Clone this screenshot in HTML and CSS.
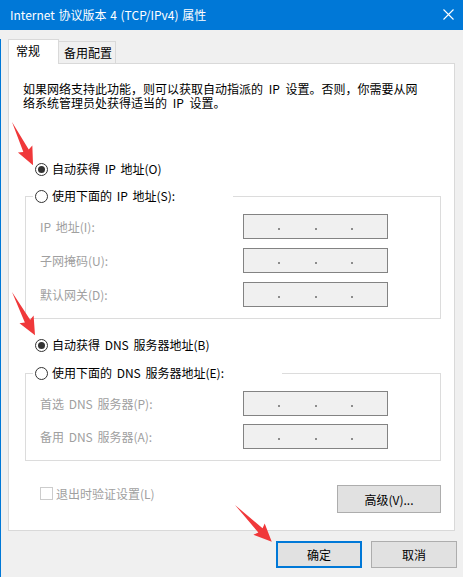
FILE: index.html
```html
<!DOCTYPE html>
<html lang="zh-CN">
<head>
<meta charset="utf-8">
<title>Internet 协议版本 4 (TCP/IPv4) 属性</title>
<link rel="stylesheet" href="styles.css">
</head>
<body>
<div class="titlebar">
  <span class="title">Internet 协议版本 4 (TCP/IPv4) 属性</span>
  <svg class="close" width="11" height="11" viewBox="0 0 11 11"><path d="M0.5 0.5 L10.5 10.5 M10.5 0.5 L0.5 10.5" stroke="#fff" stroke-width="1.1" fill="none"/></svg>
</div>
<div class="client">
  <div class="tabs">
    <div class="tab active">常规</div>
    <div class="tab">备用配置</div>
  </div>
  <div class="panel">
    <div class="desc"><span class="line">如果网络支持此功能，则可以获取自动指派的 IP 设置。否则，你需要从网</span><span class="line">络系统管理员处获得适当的 IP 设置。</span></div>
    <div class="radio-row r1"><span class="radio checked"></span>自动获得 IP 地址(O)</div>
    <fieldset class="group g1">
      <legend class="radio-row leg1"><span class="radio"></span>使用下面的 IP 地址(S):</legend>
      <div class="field"><span class="flabel">IP 地址(I):</span><span class="ipbox"><i></i><i></i><i></i></span></div>
      <div class="field"><span class="flabel">子网掩码(U):</span><span class="ipbox"><i></i><i></i><i></i></span></div>
      <div class="field"><span class="flabel">默认网关(D):</span><span class="ipbox"><i></i><i></i><i></i></span></div>
    </fieldset>
    <div class="radio-row r3"><span class="radio checked"></span>自动获得 DNS 服务器地址(B)</div>
    <fieldset class="group g2">
      <legend class="radio-row leg2"><span class="radio"></span>使用下面的 DNS 服务器地址(E):</legend>
      <div class="field"><span class="flabel">首选 DNS 服务器(P):</span><span class="ipbox"><i></i><i></i><i></i></span></div>
      <div class="field"><span class="flabel">备用 DNS 服务器(A):</span><span class="ipbox"><i></i><i></i><i></i></span></div>
    </fieldset>
    <div class="bottom-row">
      <div class="check"><span class="box"></span>退出时验证设置(L)</div>
      <div class="btn adv">高级(V)...</div>
    </div>
  </div>
  <div class="dialog-buttons">
    <div class="btn default">确定</div>
    <div class="btn">取消</div>
  </div>
</div>
<svg class="arrows" width="463" height="577" viewBox="0 0 463 577">
  <g transform="translate(12,122) rotate(64)"><polygon points="0,0 32,-3 30,-8 48,0 30,8 32,3" /></g>
  <g transform="translate(12,292) rotate(62)"><polygon points="0,0 33,-3 31,-8 49,0 31,8 33,3" /></g>
  <g transform="translate(235,505) rotate(45)"><polygon points="0,0 36,-3 34,-8 52,0 34,8 36,3" /></g>
</svg>
</body>
</html>
```
FILE: styles.css
```css
html, body {
  margin: 0;
  padding: 0;
}
body {
  width: 463px;
  height: 577px;
  background: #f0f0f0;
  font-family: "Noto Sans CJK SC", "Microsoft YaHei", sans-serif;
  font-size: 12px;
  color: #000;
  position: relative;
  overflow: hidden;
  word-spacing: 2px;
}

.titlebar {
  height: 30px;
  background: #0078d7;
  color: #fff;
  display: flex;
  align-items: center;
  justify-content: space-between;
  padding: 0 9px 0 10px;
  box-sizing: border-box;
}
.title {
  line-height: 30px;
  word-spacing: 1px;
}
.close {
  display: block;
  margin-top: -1px;
}

.client {
  border-left: 1px solid #0078d7;
  height: 547px;
  box-sizing: border-box;
}

.tabs {
  display: flex;
  align-items: flex-end;
  margin: 9px 0 0 7px;
  height: 24px;
}
.tab {
  box-sizing: border-box;
  border: 1px solid #d9d9d9;
  border-bottom: none;
  line-height: 18px;
}
.tab.active {
  width: 51px;
  height: 25px;
  margin-bottom: -1px;
  background: #fff;
  padding: 2px 0 0 7px;
  position: relative;
  z-index: 1;
}
.tab:not(.active) {
  width: 58px;
  height: 22px;
  margin-left: -1px;
  padding: 2px 0 0 5px;
}

.panel {
  margin-left: 7px;
  width: 447px;
  height: 468px;
  box-sizing: border-box;
  background: #fff;
  border: 1px solid #d9d9d9;
  padding: 18px 13px 0 14px;
  display: flex;
  flex-direction: column;
}

.desc {
  margin: 0;
  word-spacing: 3px;
  display: flex;
  flex-direction: column;
}
.desc .line {
  display: block;
  height: 14px;
  line-height: 14px;
  white-space: nowrap;
}

.radio-row {
  display: flex;
  align-items: center;
  height: 16px;
  line-height: 16px;
  white-space: nowrap;
}
.radio {
  width: 13px;
  height: 13px;
  box-sizing: border-box;
  border: 1px solid #333;
  border-radius: 50%;
  background: #fff;
  margin-right: 4px;
  display: flex;
  align-items: center;
  justify-content: center;
  flex: none;
}
.radio.checked::after {
  content: "";
  width: 7px;
  height: 7px;
  border-radius: 50%;
  background: #333;
}
.r1 {
  margin-top: 51px;
  padding-left: 12px;
}
.r3 {
  margin-top: 18px;
  padding-left: 12px;
}

.group {
  margin: 0 0 0 2px;
  border: 1px solid #dcdcdc;
  padding: 10px 0 11px 0;
  min-width: 0;
  display: flex;
  flex-direction: column;
  gap: 9px;
}
.g1 {
  margin-top: 11px;
}
.g2 {
  margin-top: 12px;
  gap: 8px;
}
.group legend {
  padding: 0 0 0 2px;
  margin-left: 7px;
  box-sizing: border-box;
  background: #fff;
}
.leg1 {
  width: 200px;
}
.leg2 {
  width: 249px;
}

.field {
  display: flex;
  align-items: center;
  padding-left: 14px;
  height: 25px;
}
.flabel {
  width: 203px;
  color: #a0a0a0;
  white-space: nowrap;
}
.ipbox {
  width: 145px;
  height: 25px;
  box-sizing: border-box;
  border: 1px solid #838383;
  background: #f0f0f0;
  display: flex;
  align-items: center;
  justify-content: space-evenly;
}
.ipbox i {
  width: 2px;
  height: 2px;
  background: #8c8c8c;
  margin-top: 5px;
}

.bottom-row {
  display: flex;
  justify-content: space-between;
  align-items: flex-start;
  margin-top: 24px;
}
.check {
  display: flex;
  align-items: center;
  height: 16px;
  margin-left: 17px;
  color: #a0a0a0;
  white-space: nowrap;
}
.check .box {
  width: 13px;
  height: 13px;
  box-sizing: border-box;
  border: 1px solid #cccccc;
  background: #fff;
  margin-right: 3px;
}

.btn {
  box-sizing: border-box;
  background: #e1e1e1;
  border: 1px solid #adadad;
  display: flex;
  align-items: center;
  justify-content: center;
  white-space: nowrap;
}
.adv {
  width: 104px;
  height: 28px;
}

.dialog-buttons {
  display: flex;
  justify-content: flex-end;
  gap: 9px;
  margin-top: 10px;
  padding-right: 6px;
}
.dialog-buttons .btn {
  width: 86px;
  height: 27px;
}
.dialog-buttons .btn.default {
  border: 2px solid #0078d7;
}

.arrows {
  position: absolute;
  left: 0;
  top: 0;
  pointer-events: none;
}
.arrows polygon {
  fill: #f0383a;
}
```
